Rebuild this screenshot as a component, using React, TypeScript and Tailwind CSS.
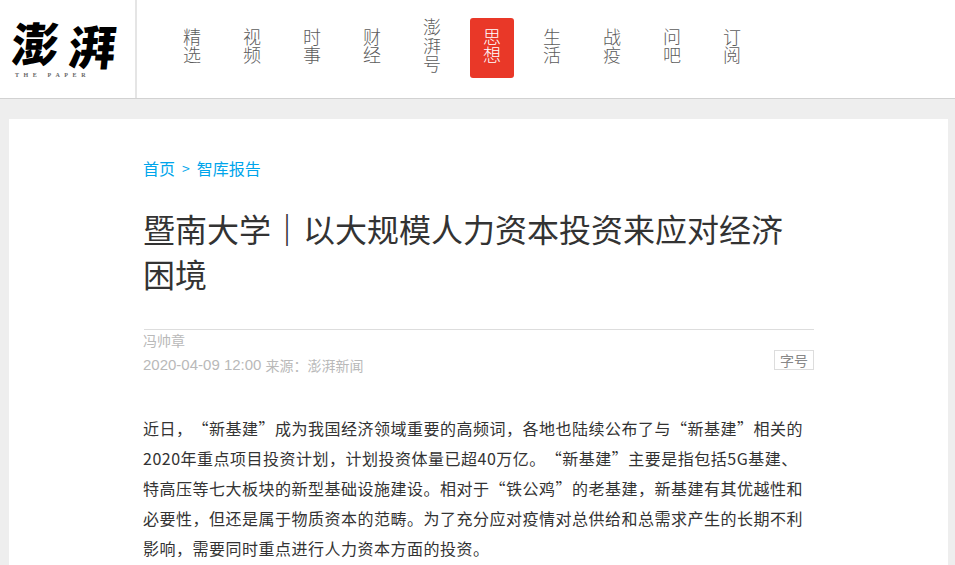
const NAV = [
  ["精", "选"],
  ["视", "频"],
  ["时", "事"],
  ["财", "经"],
  ["澎", "湃", "号"],
  ["思", "想"],
  ["生", "活"],
  ["战", "疫"],
  ["问", "吧"],
  ["订", "阅"],
];

const FONT = "font-['Noto_Sans_CJK_SC','Liberation_Sans',sans-serif] [text-spacing-trim:space-all]";

export default function App() {
  return (
    <div className={`flex h-[565px] w-[955px] flex-col overflow-hidden bg-[#eeeeee] ${FONT}`}>
      <header className="flex h-[99px] shrink-0 border-b border-[#d2d2d2] bg-white">
        <div className="flex w-[137px] shrink-0 flex-col border-r-2 border-[#e5e5e5] pl-[12px] pt-[15px]">
          <div className="flex h-[54px] w-[104px] justify-between text-[47px] leading-[54px] font-black text-black">
            <span className="-skew-x-6">澎</span>
            <span className="translate-y-[3px] -skew-x-6">湃</span>
          </div>
          <div className="ml-[3px] mt-[2px] font-['Liberation_Serif',serif] text-[6px] leading-[8px] font-bold tracking-[4.6px] whitespace-nowrap text-[#666666]">THE PAPER</div>
        </div>
        <nav className="ml-[33px] mt-[18px] flex h-[60px] items-center">
          {NAV.map((chars, i) => (
            <div
              key={i}
              className={`flex h-[60px] w-[44px] flex-col items-center justify-center rounded-[3px] pb-[6px] text-[18px] leading-[18.5px] font-light ${
                i === 5 ? "bg-[#e93828] text-white" : "text-[#5c5c5c]"
              } ${i === 0 ? "" : "ml-[16px]"}`}
            >
              {chars.map((c) => (
                <span key={c}>{c}</span>
              ))}
            </div>
          ))}
        </nav>
      </header>
      <main className="ml-[9px] mr-[7px] mt-[20px] flex-1 bg-white pl-[135px] pt-[37px]">
        <div className="w-[670px]">
          <div className="-ml-[1px] flex h-[24px] items-center text-[16px] text-[#00a5eb]">
            <span>首页</span>
            <span className="mx-[7px] text-[14px]">&gt;</span>
            <span>智库报告</span>
          </div>
          <h1 className="-ml-[1px] mt-[26px] text-[32px] leading-[45px] font-normal text-[#333333]">
            暨南大学<span className="font-bold">｜</span>以大规模人力资本投资来应对经济困境
          </h1>
          <div className="mt-[33px] border-t border-[#dddddd]">
            <div className="-ml-[1px] text-[14px] leading-[20px] text-[#b9b9b9]">冯帅章</div>
            <div className="flex items-start justify-between">
              <div className="-ml-[1px] mt-[3px] flex items-center text-[14px] leading-[24px] text-[#b9b9b9]">
                <span className="font-['Liberation_Sans',sans-serif] text-[15px]">2020-04-09 12:00</span>
                <span className="ml-[4px]">来源：澎湃新闻</span>
              </div>
              <div className="flex h-[20px] w-[40px] items-center justify-center border border-[#dddddd] text-[14px] text-[#888888]">字号</div>
            </div>
          </div>
          <p className="-ml-[1px] mt-[36px] text-[16px] leading-[30px] tracking-[0.5px] text-[#333333]">
            近日，“新基建”成为我国经济领域重要的高频词，各地也陆续公布了与“新基建”相关的2020年重点项目投资计划，计划投资体量已超40万亿。“新基建”主要是指包括5G基建、特高压等七大板块的新型基础设施建设。相对于“铁公鸡”的老基建，新基建有其优越性和必要性，但还是属于物质资本的范畴。为了充分应对疫情对总供给和总需求产生的长期不利影响，需要同时重点进行人力资本方面的投资。
          </p>
        </div>
      </main>
    </div>
  );
}
